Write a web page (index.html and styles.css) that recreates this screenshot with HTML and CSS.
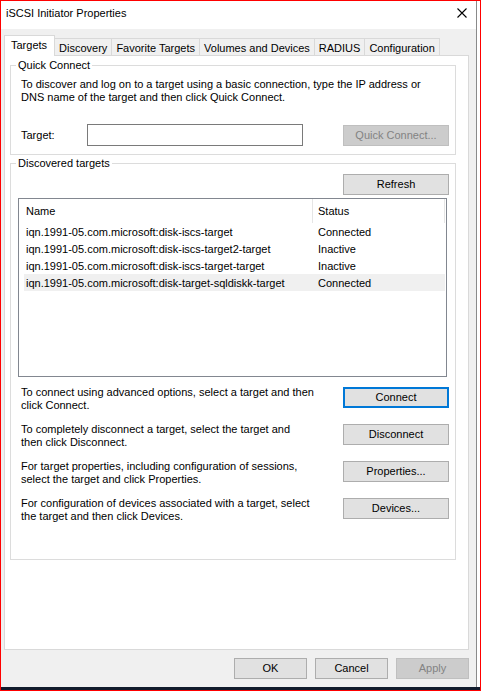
FILE: index.html
```html
<!DOCTYPE html>
<html lang="en">
<head>
    <meta charset="UTF-8">
    <title>iSCSI Initiator Properties</title>
    <link rel="stylesheet" href="styles.css">
</head>
<body>
    <div class="screen">
        <div class="window">
            <div class="titlebar">
                <span class="title">iSCSI Initiator Properties</span>
                <svg class="close" width="10" height="10" viewBox="0 0 10 10">
                    <path d="M0.5 0.5L9.5 9.5M9.5 0.5L0.5 9.5" stroke="#000" stroke-width="1.1" fill="none"/>
                </svg>
            </div>

            <div class="client">
                <div class="tabs">
                    <div class="tab active">Targets</div>
                    <div class="tab">Discovery</div>
                    <div class="tab">Favorite Targets</div>
                    <div class="tab">Volumes and Devices</div>
                    <div class="tab">RADIUS</div>
                    <div class="tab">Configuration</div>
                </div>

                <div class="panel">
                    <fieldset class="group quick">
                        <legend>Quick Connect</legend>
                        <p class="hint">To discover and log on to a target using a basic connection, type the IP address or<br>DNS name of the target and then click Quick Connect.</p>
                        <div class="target-row">
                            <label for="target">Target:</label>
                            <input id="target" type="text">
                            <button class="btn" disabled>Quick Connect...</button>
                        </div>
                    </fieldset>

                    <fieldset class="group discovered">
                        <legend>Discovered targets</legend>
                        <div class="refresh-row">
                            <button class="btn">Refresh</button>
                        </div>

                        <div class="listview">
                            <div class="lv-head">
                                <div class="col-name">Name</div>
                                <div class="col-status">Status</div>
                            </div>
                            <div class="lv-row">
                                <div class="col-name">iqn.1991-05.com.microsoft:disk-iscs-target</div>
                                <div class="col-status">Connected</div>
                            </div>
                            <div class="lv-row">
                                <div class="col-name">iqn.1991-05.com.microsoft:disk-iscs-target2-target</div>
                                <div class="col-status">Inactive</div>
                            </div>
                            <div class="lv-row">
                                <div class="col-name">iqn.1991-05.com.microsoft:disk-iscs-target-target</div>
                                <div class="col-status">Inactive</div>
                            </div>
                            <div class="lv-row selected">
                                <div class="col-name">iqn.1991-05.com.microsoft:disk-target-sqldiskk-target</div>
                                <div class="col-status">Connected</div>
                            </div>
                        </div>

                        <div class="action">
                            <p>To connect using advanced options, select a target and then<br>click Connect.</p>
                            <button class="btn focused">Connect</button>
                        </div>
                        <div class="action">
                            <p>To completely disconnect a target, select the target and<br>then click Disconnect.</p>
                            <button class="btn">Disconnect</button>
                        </div>
                        <div class="action">
                            <p>For target properties, including configuration of sessions,<br>select the target and click Properties.</p>
                            <button class="btn">Properties...</button>
                        </div>
                        <div class="action">
                            <p>For configuration of devices associated with a target, select<br>the target and then click Devices.</p>
                            <button class="btn">Devices...</button>
                        </div>
                    </fieldset>
                </div>

                <div class="footer">
                    <button class="btn small">OK</button>
                    <button class="btn small">Cancel</button>
                    <button class="btn small" disabled>Apply</button>
                </div>
            </div>
        </div>
        <div class="taskbar"></div>
    </div>
</body>
</html>
```
FILE: styles.css
```css
:root {
    --face: #f0f0f0;
    --tab-border: #d9d9d9;
    --group-border: #dcdcdc;
    --btn-face: #e1e1e1;
    --btn-border: #adadad;
    --accent: #0078d7;
}

* {
    box-sizing: border-box;
}

body {
    margin: 0;
    font: 11px/13px "Liberation Sans", Arial, sans-serif;
    color: #000;
}

.screen {
    width: 481px;
    height: 691px;
    border: 1px solid #ff0000;
    background: #fff;
    display: flex;
    flex-direction: column;
}

.window {
    width: 476px;
    height: 686px;
    border-right: 1px solid #8a8a8a;
    background: var(--face);
    display: flex;
    flex-direction: column;
}

/* title bar */
.titlebar {
    height: 28px;
    background: #fff;
    display: flex;
    justify-content: space-between;
    align-items: flex-start;
    padding: 6px 9px 0 5px;
}

.close {
    display: block;
    margin-top: 1px;
}

.client {
    flex: 1;
    display: flex;
    flex-direction: column;
    padding: 6px 7px 8px 3px;
}

/* tab strip */
.tabs {
    display: flex;
    align-items: flex-end;
    height: 20px;
}

.tab {
    height: 17px;
    padding: 3px 4px 0 4px;
    border: 1px solid var(--tab-border);
    border-bottom: none;
    margin-left: -1px;
    white-space: nowrap;
}

.tab.active {
    height: 21px;
    margin: 0 0 -1px 0;
    padding: 3px 7px 0 6px;
    background: #fff;
    position: relative;
    z-index: 1;
}

.panel {
    flex: 1;
    background: #fff;
    border: 1px solid var(--tab-border);
    padding: 3px 12px 0 5px;
}

/* group boxes */
.group {
    margin: 0;
    min-width: 0;
    border: 1px solid var(--group-border);
    padding: 0 6px 8px 10px;
}

.group legend {
    padding: 0 2px;
    margin-left: -5px;
}

.discovered {
    margin-top: 2px;
    padding-bottom: 36px;
}

p {
    margin: 0;
}

.hint {
    margin: 6px 0 20px;
}

.target-row {
    display: flex;
    align-items: center;
    height: 22px;
}

.target-row label {
    width: 66px;
}

.target-row input {
    width: 216px;
    height: 22px;
    border: 1px solid #7a7a7a;
    background: #fff;
    margin: 0;
    font: inherit;
}

.target-row .btn {
    margin-left: auto;
}

/* push buttons */
.btn {
    width: 106px;
    height: 21px;
    padding: 0;
    border: 1px solid var(--btn-border);
    background: var(--btn-face);
    font: inherit;
    color: #000;
}

.btn.small {
    width: 73px;
}

.btn.focused {
    border: 2px solid var(--accent);
}

.btn:disabled {
    background: #cccccc;
    border-color: #bfbfbf;
    color: #838383;
}

.refresh-row {
    display: flex;
    justify-content: flex-end;
    margin-top: 4px;
}

/* list view */
.listview {
    height: 179px;
    margin: 3px 2px 0 -3px;
    border: 1px solid #828790;
    background: #fff;
}

.lv-head,
.lv-row {
    display: grid;
    grid-template-columns: 289px 1fr;
    margin: 0 1px 0 5px;
}

.lv-head {
    height: 24px;
}

.lv-head > div {
    padding: 6px 0 0 2px;
    border-right: 1px solid #e5e5e5;
}

.lv-row {
    height: 17px;
}

.lv-row > div {
    padding: 3px 0 0 2px;
    white-space: nowrap;
}

.lv-head .col-status,
.lv-row .col-status {
    padding-left: 5px;
}

.lv-row.selected {
    background: #f0f0f0;
}

/* action rows */
.action {
    display: flex;
    justify-content: space-between;
    align-items: flex-start;
    height: 26px;
    margin-top: 11px;
}

.listview + .action {
    margin-top: 9px;
}

.action .btn {
    margin-top: 1px;
}

.footer {
    display: flex;
    justify-content: flex-end;
    gap: 8px;
    margin-top: 8px;
}

.taskbar {
    height: 3px;
    background: #111b2c;
}
```
